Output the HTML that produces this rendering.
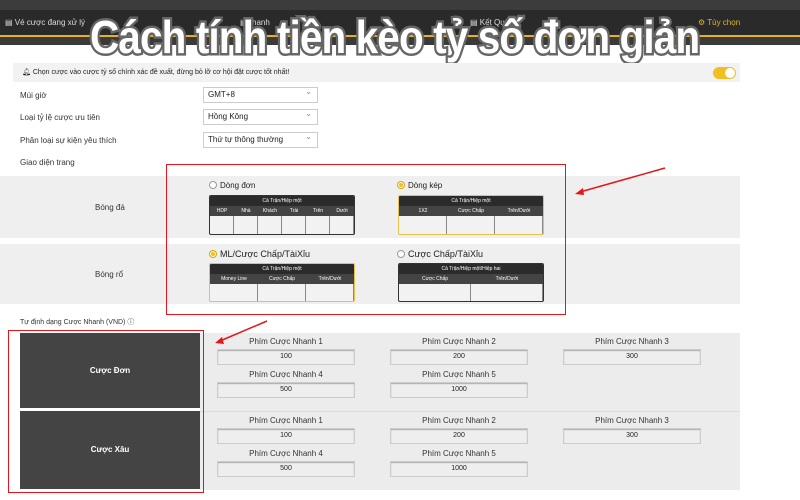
<!DOCTYPE html><html><head><meta charset="utf-8"><style>
*{margin:0;padding:0;box-sizing:border-box}
body{width:800px;height:500px;position:relative;background:#fff;font-family:"Liberation Sans",sans-serif;font-size:8px;color:#333;overflow:hidden}
.a{position:absolute}
.sel{position:absolute;left:203px;width:115px;height:16px;border:1px solid #ccc;background:#fff;font-size:8px;line-height:14px;padding-left:4px;color:#222}
.sel:after{content:"⌄";position:absolute;right:5px;top:-3px;color:#888}
.lbl{position:absolute;left:20px;font-size:8px;color:#333}
.tb{position:absolute;border:1px solid #333;border-radius:2px;background:#f2f2f2;font-size:5px;color:#fff;overflow:hidden}
.tb.y{border-color:#e8c34a}
.tb .h1{background:#2b2b2b;height:10px;line-height:10px;text-align:center}
.tb .h2{background:#444;height:10px;display:flex}
.tb .h2 div{flex:1;text-align:center;line-height:10px}
.tb .bd{display:flex;height:18px}
.tb .bd div{flex:1;border-right:1px solid #888}
.rad{position:absolute;font-size:8px;color:#222}
.rad i{display:inline-block;width:8px;height:8px;border:1px solid #999;border-radius:50%;vertical-align:-1px;margin-right:3px;background:#fff}
.rad i.on{background:#f0c020;border-color:#d9a800;box-shadow:inset 0 0 0 1px #fff}
.in{position:absolute;width:138px;height:16px;background:#eee;border:1px solid #ccc;box-shadow:inset 0 1px 1px #aaa;text-align:center;line-height:14px;font-size:7px;color:#222}
.pl{position:absolute;width:138px;text-align:center;font-size:8px;color:#333}
.dk{position:absolute;left:20px;width:180px;background:#444;color:#fff;font-weight:bold;font-size:8px;text-align:center}
</style></head><body>
<div class="a" style="left:0;top:0;width:800px;height:10px;background:#3c3c3c"></div>
<div class="a" style="left:0;top:10px;width:800px;height:25px;background:#2a2a2a"></div>
<div class="a" style="left:0;top:35px;width:800px;height:2px;background:#e5b320"></div>
<div class="a" style="left:0;top:37px;width:800px;height:8px;background:#3a3a3a"></div>
<div class="a" style="left:5px;top:18px;color:#ddd;font-size:8px">▤ Vé cược đang xử lý</div>
<div class="a" style="left:240px;top:18px;color:#ddd;font-size:8px">▤ thanh</div>
<div class="a" style="left:470px;top:18px;color:#ddd;font-size:8px">▤ Kết Quả</div>
<div class="a" style="left:698px;top:18px;color:#e5b320;font-size:8px">⚙ Tùy chọn</div>
<div class="a" style="left:90px;top:10px;font-size:46px;font-weight:bold;color:#fff;letter-spacing:-1px;-webkit-text-stroke:5px #666;paint-order:stroke fill;white-space:nowrap;transform:scaleX(0.88);transform-origin:0 0">Cách tính tiền kèo tỷ số đơn giản</div>
<div class="a" style="left:13px;top:63px;width:727px;height:19px;background:#f2f2f2"></div>
<div class="a" style="left:22px;top:68px;font-size:7px;color:#222">🔔︎ Chọn cược vào cược tỷ số chính xác đề xuất, đừng bỏ lỡ cơ hội đặt cược tốt nhất!</div>
<div class="a" style="left:713px;top:67px;width:23px;height:12px;border-radius:6px;background:#f0c020"><div class="a" style="right:1px;top:1px;width:10px;height:10px;border-radius:50%;background:#fff"></div></div>
<div class="lbl" style="top:91px">Múi giờ</div><div class="sel" style="top:87px">GMT+8</div>
<div class="lbl" style="top:113px">Loại tỷ lệ cược ưu tiên</div><div class="sel" style="top:109px">Hồng Kông</div>
<div class="lbl" style="top:136px">Phân loại sự kiện yêu thích</div><div class="sel" style="top:132px">Thứ tự thông thường</div>
<div class="lbl" style="top:158px">Giao diện trang</div>
<div class="a" style="left:0;top:176px;width:740px;height:62px;background:#efefef"></div>
<div class="a" style="left:0;top:244px;width:740px;height:60px;background:#efefef"></div>
<div class="a" style="left:95px;top:203px;font-size:8px">Bóng đá</div>
<div class="a" style="left:95px;top:270px;font-size:8px">Bóng rổ</div>
<div class="rad" style="left:209px;top:181px"><i></i>Dòng đơn</div>
<div class="rad" style="left:397px;top:181px"><i class="on"></i>Dòng kép</div>
<div class="tb" style="left:209px;top:195px;width:146px;height:40px"><div class="h1">Cả Trận/Hiệp một</div><div class="h2"><div>HDP</div><div>Nhà</div><div>Khách</div><div>Trài</div><div>Trên</div><div>Dưới</div></div><div class="bd"><div></div><div></div><div></div><div></div><div></div><div></div></div></div>
<div class="tb y" style="left:398px;top:195px;width:146px;height:40px"><div class="h1">Cả Trận/Hiệp một</div><div class="h2"><div>1X2</div><div>Cược Chấp</div><div>Trên/Dưới</div></div><div class="bd"><div></div><div></div><div></div></div></div>
<div class="rad" style="left:209px;top:249px;font-size:9px"><i class="on"></i>ML/Cược Chấp/TàiXỉu</div>
<div class="rad" style="left:397px;top:249px;font-size:9px"><i></i>Cược Chấp/TàiXỉu</div>
<div class="tb y" style="left:209px;top:263px;width:146px;height:39px"><div class="h1">Cả Trận/Hiệp một</div><div class="h2"><div>Money Line</div><div>Cược Chấp</div><div>Trên/Dưới</div></div><div class="bd"><div></div><div></div><div></div></div></div>
<div class="tb" style="left:398px;top:263px;width:146px;height:39px"><div class="h1">Cả Trận/Hiệp một/Hiệp hai</div><div class="h2"><div>Cược Chấp</div><div>Trên/Dưới</div></div><div class="bd"><div></div><div></div></div></div>
<div class="a" style="left:166px;top:164px;width:400px;height:151px;border:1.5px solid #e4161b"></div>
<svg class="a" style="left:570px;top:165px" width="100" height="35"><line x1="95" y1="3" x2="10" y2="27" stroke="#e4161b" stroke-width="1.5"/><polygon points="5,29 13,23 14,30" fill="#e4161b"/></svg>
<div class="lbl" style="top:317px;font-size:7px">Tự định dạng Cược Nhanh (VND) ⓘ</div>
<div class="a" style="left:200px;top:333px;width:540px;height:157px;background:#ececec"></div>
<div class="a" style="left:200px;top:411px;width:540px;height:1px;background:#ddd"></div>
<div class="dk" style="top:333px;height:75px;line-height:75px">Cược Đơn</div>
<div class="dk" style="top:411px;height:78px;line-height:78px">Cược Xâu</div>
<div class="a" style="left:8px;top:330px;width:196px;height:163px;border:1.5px solid #e4161b"></div>
<svg class="a" style="left:210px;top:318px" width="60" height="30"><line x1="57" y1="3" x2="10" y2="23" stroke="#e4161b" stroke-width="1.5"/><polygon points="5,25 12,19 14,26" fill="#e4161b"/></svg>
<div class="pl" style="left:217px;top:337px">Phím Cược Nhanh 1</div><div class="in" style="left:217px;top:349px">100</div>
<div class="pl" style="left:390px;top:337px">Phím Cược Nhanh 2</div><div class="in" style="left:390px;top:349px">200</div>
<div class="pl" style="left:563px;top:337px">Phím Cược Nhanh 3</div><div class="in" style="left:563px;top:349px">300</div>
<div class="pl" style="left:217px;top:370px">Phím Cược Nhanh 4</div><div class="in" style="left:217px;top:382px">500</div>
<div class="pl" style="left:390px;top:370px">Phím Cược Nhanh 5</div><div class="in" style="left:390px;top:382px">1000</div>
<div class="pl" style="left:217px;top:416px">Phím Cược Nhanh 1</div><div class="in" style="left:217px;top:428px">100</div>
<div class="pl" style="left:390px;top:416px">Phím Cược Nhanh 2</div><div class="in" style="left:390px;top:428px">200</div>
<div class="pl" style="left:563px;top:416px">Phím Cược Nhanh 3</div><div class="in" style="left:563px;top:428px">300</div>
<div class="pl" style="left:217px;top:449px">Phím Cược Nhanh 4</div><div class="in" style="left:217px;top:461px">500</div>
<div class="pl" style="left:390px;top:449px">Phím Cược Nhanh 5</div><div class="in" style="left:390px;top:461px">1000</div>
</body></html>
